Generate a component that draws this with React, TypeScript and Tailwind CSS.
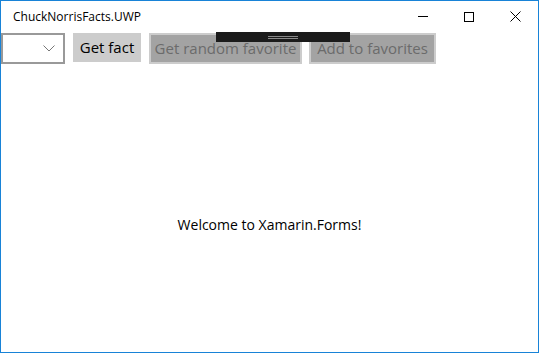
const font = { fontFamily: '"Open Sans", "Noto Sans", sans-serif' };

const TitleBar = () => (
  <div className="flex h-[31px] items-center bg-white">
    <span className="ml-[12px] text-[12px] text-black">ChuckNorrisFacts.UWP</span>
    <div className="ml-auto flex h-full items-center">
      <div className="flex h-full w-[46px] items-center justify-center">
        <div className="h-px w-[10px] bg-black" />
      </div>
      <div className="flex h-full w-[46px] items-center justify-center">
        <div className="h-[10px] w-[10px] border border-black" />
      </div>
      <div className="flex h-full w-[46px] items-center justify-center">
        <svg width="11" height="11" viewBox="0 0 11 11">
          <path d="M0.5 0.5 L10.5 10.5 M10.5 0.5 L0.5 10.5" stroke="#000" strokeWidth="1" />
        </svg>
      </div>
    </div>
  </div>
);

const App = () => {
  return (
    <div
      style={font}
      className="flex h-[353px] w-[539px] flex-col overflow-hidden border border-[#1883d7] bg-white"
    >
      <TitleBar />
      <div className="relative flex flex-1 flex-col">
        <div className="flex h-[32px] items-start pt-px">
          <div className="flex h-[31px] w-[64px] items-center justify-end border-2 border-[#999999] bg-white pr-[8px]">
            <svg width="12" height="7" viewBox="0 0 12 7">
              <path d="M0.5 0.5 L6 6 L11.5 0.5" fill="none" stroke="#777" strokeWidth="1" />
            </svg>
          </div>
          <div className="ml-[8px] flex h-[29px] w-[68px] items-center justify-center bg-[#cccccc] text-[15px] text-black">
            Get fact
          </div>
          <div className="ml-[8px] flex h-[31px] w-[153px] items-center justify-center border-2 border-[#cccccc] bg-[#a3a3a3] text-[15px] text-[#6b6b6b]">
            Get random favorite
          </div>
          <div className="ml-[7px] flex h-[31px] w-[127px] items-center justify-center border-2 border-[#cccccc] bg-[#a3a3a3] text-[15px] text-[#6b6b6b]">
            Add to favorites
          </div>
        </div>

        <div className="absolute left-[215px] top-0 flex h-[10px] w-[134px] flex-col items-center justify-center gap-px bg-[#1b1b1b]">
          <div className="h-px w-[30px] bg-[#8a8a8a]" />
          <div className="h-px w-[30px] bg-[#8a8a8a]" />
        </div>

        <div className="flex flex-1 items-start justify-center pt-[150px]">
          <span className="text-[14px] text-black">Welcome to Xamarin.Forms!</span>
        </div>
      </div>
    </div>
  );
};

export default App;
